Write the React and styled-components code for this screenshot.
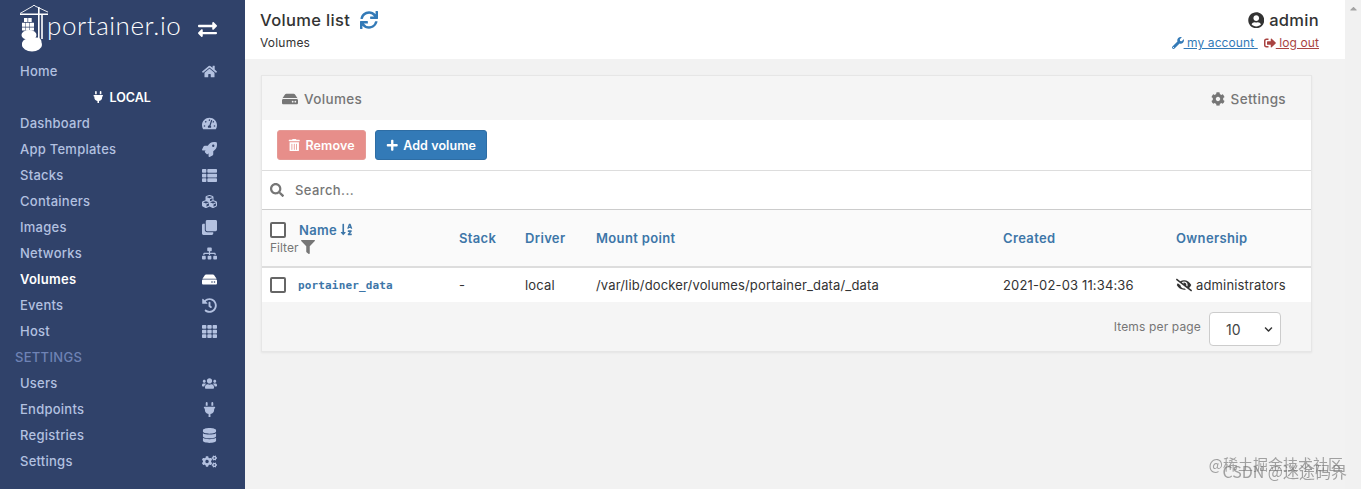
import React from "react";
import styled, { createGlobalStyle } from "styled-components";
import {
  FaHome, FaTachometerAlt, FaRocket, FaThList, FaCubes, FaClone, FaSitemap, FaHdd, FaHistory, FaTh,
  FaUsers, FaPlug, FaDatabase, FaCogs, FaExchangeAlt, FaSync, FaUserCircle, FaWrench, FaSignOutAlt,
  FaCog, FaTrashAlt, FaPlus, FaSearch, FaSortAlphaDown, FaFilter, FaEyeSlash, FaChevronDown, FaCaretUp,
} from "react-icons/fa";

const Global = createGlobalStyle`
  html, body { margin: 0; height: 100%; overflow: hidden; }
  body { font-family: Inter, "Noto Sans", sans-serif; font-size: 13px; color: #333; background: #f2f2f2; }
  * { box-sizing: border-box; }
`;

const Page = styled.div`
  position: relative;
  display: flex;
  width: 1361px;
  height: 489px;
  overflow: hidden;
`;
const Sidebar = styled.nav`
  flex: 0 0 245px;
  background: #30426a;
  color: #b3c1e0;
  display: flex;
  flex-direction: column;
`;
const Brand = styled.div`
  height: 58px;
  display: flex;
  align-items: flex-start;
  padding: 4px 28px 0 20px;
  justify-content: space-between;
`;
const Logo = styled.div`
  display: flex;
  align-items: flex-start;
`;
const LogoText = styled.span`
  font-family: Lato, sans-serif;
  font-weight: 300;
  font-size: 26px;
  line-height: 34px;
  margin: 4px 0 0 -1px;
  color: #fff;
  letter-spacing: 0.55px;
`;
const Swap = styled.span`
  display: flex;
  color: #fff;
  font-size: 19px;
  margin-top: 16px;
`;
const Item = styled.div`
  height: 26px;
  display: flex;
  align-items: center;
  justify-content: space-between;
  padding: 0 28px 0 20px;
  color: ${(p) => (p.$active ? "#fff" : "#b3c1e0")};
  font-weight: ${(p) => (p.$active ? 600 : 500)};
  letter-spacing: 0.25px;
  svg { font-size: 15px; }
`;
const IconSlot = styled.span`
  display: flex;
  width: 16px;
  justify-content: center;
`;
const Endpoint = styled.div`
  height: 26px;
  display: flex;
  align-items: center;
  justify-content: center;
  gap: 5px;
  padding-right: 2px;
  color: #fff;
  font-weight: 600;
  font-size: 12.5px;
`;
const Section = styled.div`
  height: 26px;
  display: flex;
  align-items: center;
  padding-left: 15px;
  color: #6f83b5;
  font-weight: 500;
  letter-spacing: 0.3px;
`;
const Main = styled.main`
  flex: 1;
  min-width: 0;
  display: flex;
  flex-direction: column;
`;
const Header = styled.header`
  height: 59px;
  background: #fff;
  display: flex;
  justify-content: space-between;
  padding: 9px 26px 0 15px;
`;
const TitleBlock = styled.div`
  display: flex;
  flex-direction: column;
`;
const Title = styled.div`
  display: flex;
  align-items: center;
  gap: 10px;
  font-size: 16.5px;
  font-weight: 500;
  line-height: 22px;
  letter-spacing: 0.35px;
  color: #333;
  svg { color: #337ab7; font-size: 18px; }
`;
const Breadcrumb = styled.div`
  margin-top: 4px;
  font-size: 12px;
  line-height: 16px;
  letter-spacing: 0.2px;
`;
const UserBlock = styled.div`
  display: flex;
  flex-direction: column;
  align-items: flex-end;
`;
const UserName = styled.div`
  display: flex;
  align-items: center;
  gap: 5px;
  font-size: 16.5px;
  font-weight: 500;
  line-height: 22px;
  letter-spacing: 0.3px;
`;
const Links = styled.div`
  display: flex;
  gap: 6px;
  margin-top: 4px;
  font-size: 12px;
  line-height: 16px;
`;
const Account = styled.a`
  display: flex;
  align-items: center;
  white-space: pre;
  text-decoration: underline;
  color: ${(p) => p.$color};
  letter-spacing: 0.1px;
`;
const Content = styled.div`
  padding: 16px 33px 0 16px;
`;
const Card = styled.section`
  height: 277px;
  background: #f5f5f5;
  border: 1px solid #e6e6e6;
  box-shadow: 0 1px 2px rgba(0, 0, 0, 0.06);
`;
const CardHeader = styled.div`
  height: 44px;
  display: flex;
  align-items: center;
  justify-content: space-between;
  padding: 2px 25px 0 20px;
  color: #767676;
  font-weight: 500;
  font-size: 13.5px;
  letter-spacing: 0.35px;
`;
const CardTitle = styled.div`
  display: flex;
  align-items: center;
  gap: 6px;
  svg { font-size: 16px; }
`;
const Actions = styled.div`
  height: 51px;
  background: #fff;
  display: flex;
  align-items: flex-start;
  gap: 9px;
  padding: 10px 0 0 15px;
  border-bottom: 1px solid #ddd;
`;
const Button = styled.button`
  height: 30px;
  display: flex;
  align-items: center;
  gap: 5px;
  padding: 0 10px;
  border-radius: 3px;
  border: 1px solid ${(p) => (p.$danger ? "#e59a96" : "#2e6da4")};
  background: ${(p) => (p.$danger ? "#e78e8a" : "#337ab7")};
  color: #fff;
  font: 600 12.5px Inter, sans-serif;
  letter-spacing: 0.1px;
  opacity: 1;
`;
const SearchRow = styled.div`
  height: 39px;
  background: #fff;
  display: flex;
  align-items: center;
  gap: 11px;
  padding-left: 8px;
  color: #767676;
  font-weight: 500;
  letter-spacing: 0.4px;
  border-bottom: 1px solid #ccc;
  svg { font-size: 14px; }
`;
const Grid = styled.div`
  display: grid;
  grid-template-columns: 189px 66px 71px 407px 173px 1fr;
  align-items: center;
  padding-left: 8px;
`;
const HeadRow = styled(Grid)`
  height: 58px;
  background: #fafafa;
  border-bottom: 2px solid #ddd;
  color: #3d76a8;
  font-weight: 600;
  font-size: 13px;
  letter-spacing: 0.35px;
`;
const BodyRow = styled(Grid)`
  height: 34px;
  background: #fff;
  letter-spacing: 0.15px;
`;
const NameHead = styled.div`
  display: flex;
  flex-direction: column;
  gap: 2px;
`;
const NameLine = styled.div`
  display: flex;
  align-items: center;
  gap: 13px;
`;
const NameLabel = styled.span`
  display: flex;
  align-items: center;
  gap: 3px;
  svg { font-size: 13px; }
`;
const Filter = styled.div`
  display: flex;
  align-items: center;
  gap: 3px;
  color: #767676;
  font-weight: 400;
  font-size: 12px;
  letter-spacing: 0;
  svg { font-size: 14px; }
`;
const Check = styled.span`
  display: inline-block;
  width: 16px;
  height: 16px;
  border: 2px solid #666;
  border-radius: 2px;
  background: #fff;
`;
const NameCell = styled.div`
  display: flex;
  align-items: center;
  gap: 12px;
`;
const MonoLink = styled.a`
  font-family: "DejaVu Sans Mono", monospace;
  font-weight: 700;
  font-size: 11px;
  color: #3d76a8;
  letter-spacing: 0.15px;
`;
const Owner = styled.div`
  display: flex;
  align-items: center;
  gap: 4px;
  svg { font-size: 16px; }
`;
const Footer = styled.div`
  height: 49px;
  display: flex;
  justify-content: flex-end;
  align-items: flex-start;
  gap: 8px;
  padding: 10px 30px 0 0;
  color: #767676;
  font-size: 12px;
  letter-spacing: 0.15px;
`;
const PerPage = styled.span`
  line-height: 30px;
`;
const SelectWrap = styled.div`
  position: relative;
  width: 72px;
  height: 34px;
  svg { position: absolute; right: 8px; top: 13px; font-size: 9px; color: #333; }
`;
const Select = styled.select`
  appearance: none;
  width: 100%;
  height: 100%;
  padding-left: 16px;
  border: 1px solid #ccc;
  border-radius: 4px;
  background: #fff;
  color: #444;
  font: 400 14px Inter, sans-serif;
`;
const Scrollbar = styled.div`
  flex: 0 0 16px;
  background: #f1f1f1;
  display: flex;
  justify-content: center;
  color: #a3a3a3;
  padding-top: 3px;
  svg { font-size: 11px; }
`;
const Watermark = styled.div`
  position: absolute;
  color: rgba(110, 110, 110, 0.62);
  font-family: "Noto Sans CJK SC", sans-serif;
  white-space: nowrap;
  filter: blur(0.4px);
  right: ${(p) => p.$right}px;
  bottom: ${(p) => p.$bottom}px;
  font-size: ${(p) => p.$size}px;
`;

const CraneLogo = () => (
  <svg width="28" height="48" viewBox="0 0 28 48" fill="#fff" style={{ flexShrink: 0 }}>
    <path d="M0 9.5 L13 2 L14 1 L15 2 L31 9.5" stroke="#fff" strokeWidth="0.9" fill="none" />
    <rect x="0" y="9.5" width="31" height="1.5" />
    <rect x="18" y="3" width="1.6" height="32" />
    <rect x="21.2" y="10" width="1.6" height="25" />
    <path d="M4 14h3.5v4H4zM8.2 14h3.5v4H8.2zM2 18.7h3.5v4H2zM6 18.7h3.5v4H6zM10 18.7h4v4h-4zM2 23.4h3.5v3H2zM6 23.4h3.5v3H6zM10 23.4h4v3h-4z" />
    <ellipse cx="9" cy="31" rx="7.5" ry="5" />
    <ellipse cx="12" cy="41" rx="10" ry="6.5" />
    <circle cx="7" cy="40" r="5" />
    <circle cx="17" cy="38" r="4.5" />
    <circle cx="12" cy="36.5" r="4.5" />
  </svg>
);

const top = [
  ["Dashboard", FaTachometerAlt],
  ["App Templates", FaRocket],
  ["Stacks", FaThList],
  ["Containers", FaCubes],
  ["Images", FaClone],
  ["Networks", FaSitemap],
  ["Volumes", FaHdd, true],
  ["Events", FaHistory],
  ["Host", FaTh],
];
const bottom = [
  ["Users", FaUsers],
  ["Endpoints", FaPlug],
  ["Registries", FaDatabase],
  ["Settings", FaCogs],
];

const NavItem = ({ label, icon: Icon, active }) => (
  <Item $active={active}>
    {label}
    <IconSlot><Icon /></IconSlot>
  </Item>
);

export default function App() {
  return (
    <Page>
      <Global />
      <Sidebar>
        <Brand>
          <Logo>
            <CraneLogo />
            <LogoText>portainer.io</LogoText>
          </Logo>
          <Swap><FaExchangeAlt /></Swap>
        </Brand>
        <NavItem label="Home" icon={FaHome} />
        <Endpoint><FaPlug /> LOCAL</Endpoint>
        {top.map(([l, i, a]) => <NavItem key={l} label={l} icon={i} active={a} />)}
        <Section>SETTINGS</Section>
        {bottom.map(([l, i]) => <NavItem key={l} label={l} icon={i} />)}
      </Sidebar>
      <Main>
        <Header>
          <TitleBlock>
            <Title>Volume list <FaSync /></Title>
            <Breadcrumb>Volumes</Breadcrumb>
          </TitleBlock>
          <UserBlock>
            <UserName><FaUserCircle /> admin</UserName>
            <Links>
              <Account $color="#337ab7"><FaWrench size={12} /> my account </Account>
              <Account $color="#a94442"><FaSignOutAlt size={12} /> log out</Account>
            </Links>
          </UserBlock>
        </Header>
        <Content>
          <Card>
            <CardHeader>
              <CardTitle><FaHdd /> Volumes</CardTitle>
              <CardTitle><FaCog size={14} /> Settings</CardTitle>
            </CardHeader>
            <Actions>
              <Button $danger><FaTrashAlt /> Remove</Button>
              <Button><FaPlus /> Add volume</Button>
            </Actions>
            <SearchRow><FaSearch /> Search...</SearchRow>
            <HeadRow>
              <NameHead>
                <NameLine>
                  <Check />
                  <NameLabel>Name <FaSortAlphaDown /></NameLabel>
                </NameLine>
                <Filter>Filter <FaFilter /></Filter>
              </NameHead>
              <div>Stack</div>
              <div>Driver</div>
              <div>Mount point</div>
              <div>Created</div>
              <div>Ownership</div>
            </HeadRow>
            <BodyRow>
              <NameCell><Check /><MonoLink>portainer_data</MonoLink></NameCell>
              <div>-</div>
              <div>local</div>
              <div>/var/lib/docker/volumes/portainer_data/_data</div>
              <div>2021-02-03 11:34:36</div>
              <Owner><FaEyeSlash /> administrators</Owner>
            </BodyRow>
            <Footer>
              <PerPage>Items per page</PerPage>
              <SelectWrap>
                <Select defaultValue="10"><option>10</option></Select>
                <FaChevronDown />
              </SelectWrap>
            </Footer>
          </Card>
        </Content>
      </Main>
      <Scrollbar><FaCaretUp /></Scrollbar>
      <Watermark $right={18} $bottom={15} $size={15}>@稀土掘金技术社区</Watermark>
      <Watermark $right={14} $bottom={6} $size={16}>CSDN @迷途码界</Watermark>
    </Page>
  );
}
